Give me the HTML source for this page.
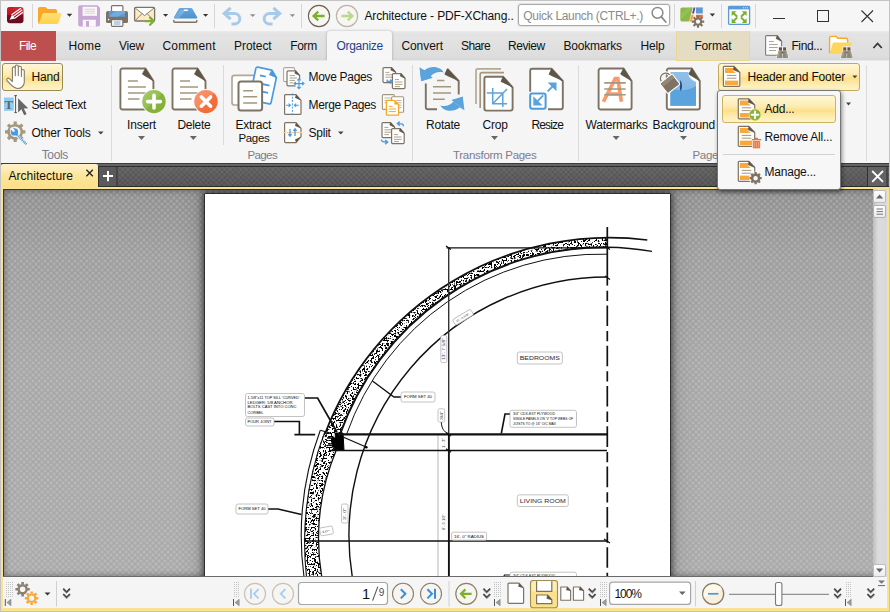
<!DOCTYPE html>
<html>
<head>
<meta charset="utf-8">
<title>Architecture - PDF-XChange Editor</title>
<style>
html,body{margin:0;padding:0;}
body{width:890px;height:612px;overflow:hidden;background:#f4f4f4;font-family:"Liberation Sans",sans-serif;font-size:12px;color:#111;}
#app{position:relative;width:890px;height:612px;overflow:hidden;background:#f4f4f4;}
.abs{position:absolute;}
.t{position:absolute;white-space:nowrap;line-height:14px;height:14px;}
.c{text-align:center;}
svg{position:absolute;overflow:visible;}
/* title bar */
#titlebar{left:0;top:0;width:890px;height:31px;background:#f6f6f6;}
.vsep{position:absolute;width:1px;background:#d6d6d6;}
/* tab bar */
#tabbar{left:0;top:31px;width:890px;height:29px;background:linear-gradient(#ececec 0,#e4e4e4 2px,#dddddd 26px,#d6d6d6 29px);}
#filebtn{left:1px;top:31px;width:55px;height:29px;background:#bd4f4f;color:#fff;}
#orgtab{left:327px;top:31px;width:65px;height:30px;background:#f6f6f6;box-sizing:border-box;border-radius:3px 3px 0 0;box-shadow:0 0 3px rgba(0,0,0,.28);clip-path:inset(-4px -4px 0 -4px);}
#fmttab{left:676px;top:31px;width:74px;height:30px;background:#e4ddc3;border:1px solid #e9d892;border-top:none;box-sizing:border-box;}
/* ribbon */
#ribbon{left:0;top:60px;width:890px;height:103px;background:linear-gradient(#e9e9e9 0,#e9e9e9 1px,#f5f5f5 1px);}
#ribbonline{left:0;top:163px;width:890px;height:1px;background:#3c3c3c;}
.glabel{color:#7c7c8c;}
.ybtn{position:absolute;box-sizing:border-box;border:1px solid #c2a95c;border-radius:3px;background:linear-gradient(#fef6d8 0%,#fdecb0 40%,#fbe08c 56%,#fdecae 78%,#fef4cc 100%);}
/* doc tabs */
#doctabs{left:1px;top:164px;width:888px;height:23px;background:linear-gradient(#6a6a6a 0,#5e5e5e 2px,#303030 2px,#303030 3px,#646464 3px,#565656 22px,#2a2a2a 22px);}
#doctab{left:1px;top:164px;width:97px;height:25px;border-radius:2px 2px 0 0;background:linear-gradient(#fdf1cc 0%,#fce597 50%,#fbe08a 100%);}
#yline{left:1px;top:187px;width:888px;height:2px;background:#f9e391;}
#docarea{left:3px;top:189px;width:884px;height:388px;background:#8d8d8d;overflow:hidden;}
#bottombar{left:3px;top:577px;width:884px;height:31px;background:#f5f5f5;}
.yframe{position:absolute;background:#f9e391;}
.gframe{position:absolute;background:#cfcfcf;}
</style>
</head>
<body>
<div id="app">

<!-- ================= TITLE BAR ================= -->
<div id="titlebar" class="abs"></div>
<div class="vsep" style="left:32px;top:4px;height:24px"></div>
<div class="vsep" style="left:214px;top:4px;height:24px"></div>
<div class="vsep" style="left:301px;top:4px;height:24px"></div>
<div class="vsep" style="left:674px;top:4px;height:24px"></div>
<div class="vsep" style="left:721px;top:4px;height:24px"></div>
<div class="vsep" style="left:755px;top:4px;height:24px"></div>
<div class="t" style="left:364.4px;top:9px;letter-spacing:-0.13px;">Architecture - PDF-XChang..</div>
<div class="abs" style="left:518px;top:4px;width:152px;height:22px;box-sizing:border-box;border:1px solid #a9a9a9;border-radius:3px;background:#fff;box-shadow:0 0 0 1px #e3e3e3;"></div>
<div class="t" style="left:523.3px;top:8.6px;color:#8a8a8a;letter-spacing:-0.32px;">Quick Launch (CTRL+.)</div>
<!--TI-START-->
<svg style="left:0;top:0" width="890" height="31" viewBox="0 0 890 31">
<defs>
<linearGradient id="appg" x1="0" y1="0" x2="0" y2="1"><stop offset="0" stop-color="#dc2433"/><stop offset="0.5" stop-color="#b4141f"/><stop offset="0.52" stop-color="#7a0d22"/><stop offset="1" stop-color="#640a1e"/></linearGradient>
<linearGradient id="foldf" x1="0" y1="0" x2="0" y2="1"><stop offset="0" stop-color="#ffe07a"/><stop offset="1" stop-color="#ffd24a"/></linearGradient>
<linearGradient id="scang" x1="0" y1="0" x2="0" y2="1"><stop offset="0" stop-color="#6aa8dc"/><stop offset="1" stop-color="#4d90cf"/></linearGradient>
</defs>
<!-- app icon -->
<rect x="7" y="7" width="16.5" height="16.3" rx="3" fill="url(#appg)"/>
<path d="M7,10 a3,3 0 0 1 3,-3 h4 l-7,8 z" fill="#c81824" opacity=".8"/>
<g stroke="#fff" stroke-width="1.2" fill="none" stroke-linecap="round"><path d="M13.2,16.4 L21.8,10.2"/><path d="M14.6,18.2 L22.6,12.4"/><path d="M12,14.6 L20.6,8.6"/></g>
<path d="M9.6,19.8 L12,14.8 L14.8,18.4 Z" fill="#fff"/>
<!-- folder -->
<path d="M38,9 a2,2 0 0 1 2,-2 h5.5 l2,2 h7.5 a2,2 0 0 1 2,2 v11 a2,2 0 0 1 -2,2 h-15 a2,2 0 0 1 -2,-2 z" fill="#f9a726"/>
<path d="M43.5,13 h17 a1,1 0 0 1 1,1.3 l-3,8.5 a2,2 0 0 1 -1.8,1.2 h-16.5 a1,1 0 0 1 -1,-1.3 l3,-8.5 a2,2 0 0 1 1.3,-1.2 z" fill="url(#foldf)"/>
<path d="M66.7,13.8 h5.6 l-2.8,3 z" fill="#333"/>
<!-- save -->
<path d="M78.2,7 a1.8,1.8 0 0 1 1.8,-1.8 h17.5 l2.5,2.5 v17.1 a1.8,1.8 0 0 1 -1.8,1.8 h-18.2 a1.8,1.8 0 0 1 -1.8,-1.8 z" fill="#c8a9d6"/>
<rect x="82.6" y="6.8" width="14.4" height="9" fill="#fbf7fb"/>
<path d="M84.5,9.2 h10.5 M84.5,11.2 h10.5 M84.5,13.2 h10.5" stroke="#d8cbb8" stroke-width="0.8"/>
<rect x="82.8" y="19.8" width="13" height="6.8" fill="#fbf7fb"/>
<rect x="86" y="21" width="3" height="5.6" fill="#c8a9d6"/>
<!-- printer -->
<rect x="111.5" y="5.6" width="11.4" height="7" rx="1" fill="#fff" stroke="#7d7263" stroke-width="1.2"/>
<path d="M106,13 a2,2 0 0 1 2,-2 h18 a2,2 0 0 1 2,2 v8.5 a1.5,1.5 0 0 1 -1.5,1.5 h-19 a1.5,1.5 0 0 1 -1.5,-1.5 z" fill="#7d7263"/>
<rect x="108.8" y="11" width="16.4" height="5.8" fill="#5b9bd5"/>
<path d="M108.8,16.8 L116,11 h9.2 v2 L117,16.8 z" fill="#7ab3e2" opacity=".7"/>
<rect x="111.5" y="19.6" width="11.4" height="6.8" rx="0.8" fill="#fff" stroke="#7d7263" stroke-width="1.2"/>
<path d="M113.8,22 h6.8 M113.8,24 h6.8" stroke="#5b9bd5" stroke-width="0.9"/>
<circle cx="108.6" cy="19.6" r="0.8" fill="#fff"/>
<!-- email -->
<rect x="134.6" y="7.4" width="20" height="13.6" rx="1.2" fill="#fdebc6" stroke="#7d7263" stroke-width="1.3"/>
<path d="M135.2,8 L144.6,15.6 L154,8 Z" fill="#fff"/>
<path d="M135.2,8 L144.6,15.6 L154,8 M135.2,20.6 L142,13.6 M154,20.6 L147.2,13.6" fill="none" stroke="#7d7263" stroke-width="0.9"/>
<path d="M145.5,21.2 h7.2 M150,17.8 L153.6,21.2 L150,24.8" fill="none" stroke="#7cb02c" stroke-width="2.2" stroke-linecap="round" stroke-linejoin="round"/>
<path d="M163,14 h5.2 l-2.6,2.8 z" fill="#333"/>
<!-- scanner -->
<path d="M180.5,8 h10.6 a1.5,1.5 0 0 1 1.3,0.8 l4.8,8.4 a0.8,0.8 0 0 1 -0.7,1.2 h-21.8 a0.8,0.8 0 0 1 -0.7,-1.2 l4.8,-8.4 a1.5,1.5 0 0 1 1.3,-0.8 z" fill="url(#scang)"/>
<path d="M174,18 L180,10 L186,10 L179,18.4 Z" fill="#8fc0ea" opacity=".5"/>
<rect x="183.6" y="9.6" width="4.4" height="1.4" rx="0.7" fill="#fff"/>
<path d="M173.8,20.4 v1 a0.8,0.8 0 0 0 0.8,0.8 h21.4 a0.8,0.8 0 0 0 0.8,-0.8 v-1" fill="none" stroke="#7d7263" stroke-width="1.4" stroke-linecap="round"/>
<path d="M203,14 h5.2 l-2.6,2.8 z" fill="#333"/>
<!-- undo / redo -->
<g fill="none" stroke="#a6cae8" stroke-width="3" stroke-linecap="butt" stroke-linejoin="miter">
<path d="M225,13.5 H234.5 a5.3,5.3 0 0 1 0,10.6 H231.5"/>
<path d="M279,13.5 H269.5 a5.3,5.3 0 0 0 0,10.6 H272.5"/>
</g>
<path d="M222,13.5 L229.6,6.8 L231.6,9 L226.6,13.5 L231.6,18 L229.6,20.2 Z" fill="#a6cae8"/>
<path d="M282,13.5 L274.4,6.8 L272.4,9 L277.4,13.5 L272.4,18 L274.4,20.2 Z" fill="#a6cae8"/>
<path d="M250,14.3 h5.4 l-2.7,2.8 z" fill="#8e8e8e"/>
<path d="M289.7,14.3 h5.4 l-2.7,2.8 z" fill="#8e8e8e"/>
<!-- back / forward -->
<circle cx="319" cy="16" r="10.6" fill="#f7f6f2" stroke="#6e6450" stroke-width="1.1"/>
<path d="M313.6,16 h11 M318.2,11.6 L313.6,16 L318.2,20.4" fill="none" stroke="#7cb02c" stroke-width="2.3" stroke-linejoin="miter"/>
<circle cx="347" cy="16" r="10.6" fill="#f7f6f2" stroke="#bcb5a6" stroke-width="1.2"/>
<path d="M352.4,16 h-11 M347.8,11.6 L352.4,16 L347.8,20.4" fill="none" stroke="#b9d98f" stroke-width="2.3" stroke-linejoin="miter"/>
<!-- magnifier -->
<circle cx="657.5" cy="12.8" r="5.4" fill="none" stroke="#8a8a8a" stroke-width="1.5"/>
<path d="M661.4,16.8 L665.8,22" stroke="#8a8a8a" stroke-width="1.8" stroke-linecap="round"/>
<!-- UI options -->
<path d="M682,7.4 h10.8 l-3.6,14.2 h-7.2 a1.6,1.6 0 0 1 -1.6,-1.6 v-11 a1.6,1.6 0 0 1 1.6,-1.6 z" fill="#8bb84a"/>
<path d="M680.4,20 L692.8,7.4 h-4 L680.4,14 z" fill="#9cc65c" opacity=".6"/>
<path d="M693.6,7.4 h1.8 l-1.4,6.1 h-2 z" fill="#7a3a9a"/>
<rect x="696" y="7.4" width="6.8" height="6.1" fill="#5b9bd5"/>
<path d="M691.4,14.8 h2.2 l-1.7,6.8 h-2.2 z" fill="#f5a030"/>
<rect x="696" y="14.8" width="6.8" height="3" fill="#ee6a3a"/>
<g fill="#7d7263"><circle cx="698" cy="21.6" r="4.2"/>
<g stroke="#7d7263" stroke-width="2.1"><path d="M698,15.4 v12.4 M691.8,21.6 h12.4 M693.6,17.2 l8.8,8.8 M702.4,17.2 l-8.8,8.8"/></g></g>
<circle cx="698" cy="21.6" r="2.2" fill="#f6f6f6"/>
<path d="M709.7,13.6 h5.4 l-2.7,3 z" fill="#333"/>
<!-- fullscreen -->
<rect x="728.6" y="6.4" width="21" height="18" rx="0.8" fill="#fbfdff" stroke="#5b9bd5" stroke-width="1.3"/>
<rect x="728.6" y="6.4" width="21" height="3" fill="#5b9bd5"/>
<g fill="#fff"><circle cx="743.4" cy="7.8" r="0.55"/><circle cx="745.4" cy="7.8" r="0.55"/><circle cx="747.4" cy="7.8" r="0.55"/></g>
<g fill="#7cb02c" stroke="#7cb02c">
<g id="fsarr"><path d="M731.6,11.2 H736.4 L731.6,16 Z" stroke="none"/><path d="M733.4,13 L737.2,16.8" stroke-width="2" fill="none"/></g>
<use href="#fsarr" transform="translate(1478.2,0) scale(-1,1)"/>
<use href="#fsarr" transform="translate(0,34.2) scale(1,-1)"/>
<use href="#fsarr" transform="translate(1478.2,34.2) scale(-1,-1)"/>
</g>
<!-- window controls -->
<path d="M773,18.5 h12" stroke="#333" stroke-width="1"/>
<rect x="817.5" y="10.5" width="11" height="11" fill="none" stroke="#333" stroke-width="1"/>
<path d="M861.5,10.5 l11.5,11.5 M873,10.5 l-11.5,11.5" stroke="#333" stroke-width="1.1"/>
</svg>
<!--TI-END-->

<!-- ================= TAB BAR ================= -->
<div id="tabbar" class="abs"></div>
<div id="filebtn" class="abs"></div>
<div id="orgtab" class="abs"></div>
<div id="fmttab" class="abs"></div>
<div class="t" style="left:19.0px;top:39px;color:#fff;letter-spacing:-0.59px;">File</div>
<div class="t" style="left:68.4px;top:39px;letter-spacing:0.15px;">Home</div>
<div class="t" style="left:119.0px;top:39px;letter-spacing:-0.20px;">View</div>
<div class="t" style="left:162.5px;top:39px;letter-spacing:0.17px;">Comment</div>
<div class="t" style="left:234.0px;top:39px;letter-spacing:-0.06px;">Protect</div>
<div class="t" style="left:290.2px;top:39px;letter-spacing:-0.30px;">Form</div>
<div class="t" style="left:336.4px;top:39px;color:#1f3f8f;letter-spacing:-0.26px;">Organize</div>
<div class="t" style="left:401.4px;top:39px;letter-spacing:-0.06px;">Convert</div>
<div class="t" style="left:461.0px;top:39px;letter-spacing:-0.61px;">Share</div>
<div class="t" style="left:508.0px;top:39px;letter-spacing:-0.44px;">Review</div>
<div class="t" style="left:563.4px;top:39px;letter-spacing:-0.18px;">Bookmarks</div>
<div class="t" style="left:640.5px;top:39px;letter-spacing:-0.15px;">Help</div>
<div class="t" style="left:694.4px;top:39px;letter-spacing:-0.17px;">Format</div>
<div class="t" style="left:791.4px;top:39px;letter-spacing:-0.35px;">Find...</div>
<!--TB-START-->
<svg style="left:0;top:31px" width="890" height="30" viewBox="0 31 890 30">
<defs>
<g id="binoc">
<path d="M2,0 H5.2 V3.1 L5.6,11.1 H-0.1 L2,3.1 Z M6.1,0 H9.3 V3.1 L11.3,11.1 H5.7 L6.1,3.1 Z" fill="#f4f4f4" stroke="#f4f4f4" stroke-width="1.2" stroke-linejoin="round"/>
<path d="M2.1,3 H5.1 L5.5,10.2 H0 Z" fill="#8f8675"/><path d="M6.2,3 H9.2 L11.2,10.2 H5.8 Z" fill="#8f8675"/>
<path d="M2.1,3 L0,10.2 H2.2 L3.4,3 Z M9.2,3 L11.2,10.2 H9.4 L8.2,3 Z" fill="#a59c8a"/>
<rect x="2.1" y="1" width="3" height="2.1" fill="#5d5548"/><rect x="6.2" y="1" width="3" height="2.1" fill="#5d5548"/>
<rect x="5" y="4.6" width="1.3" height="2" fill="#5d5548"/>
<rect x="0" y="10.1" width="5.5" height="1.1" fill="#41a0ea"/><rect x="5.8" y="10.1" width="5.4" height="1.1" fill="#41a0ea"/>
<rect x="2.1" y="0" width="3" height="1.1" fill="#41a0ea"/><rect x="6.2" y="0" width="3" height="1.1" fill="#41a0ea"/>
</g>
</defs>
<!-- find doc -->
<path d="M766.6,35.6 h10.6 l4.4,5.8 v12.8 a1,1 0 0 1 -1,1 h-14 a1,1 0 0 1 -1,-1 v-17.6 a1,1 0 0 1 1,-1 z" fill="#fdfdfd" stroke="#857a67" stroke-width="1.1" stroke-linejoin="round"/>
<path d="M777.2,35.6 L776,38.6 L781.4,41.2 Z" fill="#5d5548" stroke="#5d5548" stroke-width="0.5" stroke-linejoin="round"/>
<path d="M769,41.5 h4.8 M769,44.5 h8.8 M769,47.5 h8.8 M769,50.5 h7" stroke="#9a8f7c" stroke-width="0.8"/>
<use href="#binoc" x="776.9" y="46.9"/>
<!-- folder search -->
<path d="M829.6,38 a1.6,1.6 0 0 1 1.6,-1.6 h5 l1.8,1.8 h8 a1.6,1.6 0 0 1 1.6,1.6 v12.6 h-18 z" fill="#fff" stroke="#f9a726" stroke-width="1.4"/>
<path d="M834,42.4 h17 a0.8,0.8 0 0 1 0.8,1 l-2.6,9.4 a1.6,1.6 0 0 1 -1.5,1.2 h-16.9 a0.8,0.8 0 0 1 -0.8,-1 l2.6,-9.4 a1.6,1.6 0 0 1 1.4,-1.2 z" fill="#ffd65c"/>
<use href="#binoc" x="841.2" y="46.9"/>
<!-- caret -->
<path d="M873.4,48 L877.6,43.4 L881.8,48" fill="none" stroke="#333" stroke-width="1.7"/>
</svg>
<!--TB-END-->

<!-- ================= RIBBON ================= -->
<div id="ribbon" class="abs"></div>
<div class="abs" style="left:327px;top:60px;width:65px;height:1px;background:#f6f6f6;"></div>
<div class="abs" style="left:676px;top:60px;width:74px;height:1px;background:#e9d892;"></div>
<div class="abs" style="left:1px;top:60px;width:55px;height:1px;background:#c05a58;"></div>
<div class="vsep" style="left:111px;top:65px;height:96px;background:#dadada"></div>
<div class="vsep" style="left:223px;top:65px;height:80px;background:#dadada"></div>
<div class="vsep" style="left:412px;top:65px;height:96px;background:#dadada"></div>
<div class="vsep" style="left:578px;top:65px;height:96px;background:#dadada"></div>
<div class="vsep" style="left:866px;top:65px;height:96px;background:#dadada"></div>
<div class="ybtn" style="left:2px;top:63px;width:61px;height:28px;border-color:#9c8b4e;"></div>
<div class="t" style="left:31.4px;top:70px;letter-spacing:-0.17px;">Hand</div>
<div class="t" style="left:31.4px;top:98px;letter-spacing:-0.36px;">Select Text</div>
<div class="t" style="left:31.4px;top:126px;letter-spacing:-0.17px;">Other Tools</div>
<div class="t glabel" style="left:41.7px;top:148px;letter-spacing:-0.36px;">Tools</div>
<div class="t" style="left:127.0px;top:118px;letter-spacing:-0.17px;">Insert</div>
<div class="t" style="left:177.4px;top:118px;letter-spacing:-0.26px;">Delete</div>
<div class="t" style="left:235.4px;top:118px;letter-spacing:-0.25px;">Extract</div>
<div class="t" style="font-size:11.5px;left:238.4px;top:131px;letter-spacing:-0.30px;">Pages</div>
<div class="t glabel" style="font-size:11.5px;left:247.5px;top:148px;letter-spacing:-0.62px;">Pages</div>
<div class="t" style="left:308.6px;top:70px;letter-spacing:-0.33px;">Move Pages</div>
<div class="t" style="left:308.6px;top:98px;letter-spacing:-0.36px;">Merge Pages</div>
<div class="t" style="left:308.6px;top:126px;letter-spacing:-0.27px;">Split</div>
<div class="t" style="left:426.0px;top:118px;letter-spacing:-0.23px;">Rotate</div>
<div class="t" style="left:482.4px;top:118px;letter-spacing:-0.18px;">Crop</div>
<div class="t" style="left:531.4px;top:118px;letter-spacing:-0.85px;">Resize</div>
<div class="t glabel" style="font-size:11.5px;left:453.0px;top:148px;letter-spacing:-0.29px;">Transform Pages</div>
<div class="t" style="left:585.6px;top:118px;letter-spacing:-0.22px;">Watermarks</div>
<div class="t" style="left:652.6px;top:118px;letter-spacing:-0.17px;">Background</div>
<div class="t glabel" style="font-size:11.5px;left:692.5px;top:148px;letter-spacing:-0.34px;">Page</div>
<div class="ybtn" style="left:718px;top:63px;width:142px;height:28px;"></div>
<div class="t" style="left:747.5px;top:70px;letter-spacing:-0.19px;">Header and Footer</div>
<!--R1-START-->
<svg style="left:0;top:60px" width="890" height="104" viewBox="0 60 890 104">
<defs>
<linearGradient id="grn" x1="0" y1="0" x2="1" y2="1"><stop offset="0" stop-color="#a9cc6e"/><stop offset="0.5" stop-color="#93bd4c"/><stop offset="0.5" stop-color="#86b33a"/><stop offset="1" stop-color="#84b238"/></linearGradient>
<linearGradient id="red" x1="0" y1="0" x2="1" y2="1"><stop offset="0" stop-color="#fb966e"/><stop offset="0.5" stop-color="#f9875a"/><stop offset="0.5" stop-color="#f4703c"/><stop offset="1" stop-color="#f26a34"/></linearGradient>
<!-- big page 33x41 at 0,0 with fold -->
<g id="bigpage">
<path d="M2,0 H25 L33,12.4 V39 a2,2 0 0 1 -2,2 H2 a2,2 0 0 1 -2,-2 V2 a2,2 0 0 1 2,-2 z" fill="#fff" stroke="#7d7263" stroke-width="1.9" stroke-linejoin="round"/>
<path d="M25,0 L22,5.6 C25,8 29,9.5 32.4,12 Z" fill="#5d5548" stroke="#5d5548" stroke-width="0.8" stroke-linejoin="round"/>
</g>
<g id="pagelines" stroke="#a3977f" stroke-width="1.5">
<path d="M7.5,12.4 H17.5 M7.5,18.5 H25.5 M7.5,24.4 H25.5 M7.5,30.4 H19"/>
</g>
<!-- small page 12.5x15 -->
<g id="smpage">
<path d="M1,0 H8.6 L12.6,4.6 V14 a1,1 0 0 1 -1,1 H1 a1,1 0 0 1 -1,-1 V1 a1,1 0 0 1 1,-1 z" fill="#fff" stroke="#7d7263" stroke-width="1.2" stroke-linejoin="round"/>
<path d="M8.6,0 L7.8,2.4 L12.4,4.6 Z" fill="#5d5548" stroke="#5d5548" stroke-width="0.6" stroke-linejoin="round"/>
</g>
</defs>
<!-- hand -->
<path d="M12.4,81.6 V68.3 a1.4,1.4 0 0 1 2.9,0 V75.6 V66.5 a1.5,1.5 0 0 1 3,0 V75.6 V67.8 a1.5,1.5 0 0 1 3.1,0 V76.4 V70.9 a1.45,1.45 0 0 1 2.9,0 V82 C24.3,86 21,88.5 17.7,88.5 C14.5,88.5 12.6,86.6 10.4,84.2 L7.2,80.8 a1.5,1.5 0 0 1 2.2,-2.2 L12.4,81.6 Z" fill="#fff" stroke="#857a64" stroke-width="1.1" stroke-linejoin="round"/>
<!-- select text -->
<rect x="4" y="97.5" width="9.8" height="13.3" fill="#8ecdf6"/>
<text x="8.9" y="109" font-family="'Liberation Serif',serif" font-size="13" font-weight="bold" fill="#666" text-anchor="middle">T</text>
<path d="M15.6,95.6 V112.6 M14.3,95.6 H16.9 M14.3,112.6 H16.9" stroke="#555" stroke-width="1"/>
<path d="M18.1,98.2 V112.4 L21.4,109.3 L24.2,115.2 L26.6,114 L23.8,108.4 L28.2,108.2 Z" fill="#666"/>
<!-- other tools gear -->
<g stroke="#a3977f" fill="none">
<circle cx="15.2" cy="131.8" r="6.6" stroke-width="2.6"/>
<g stroke-width="3.2"><path d="M15.2,121.6 v3 M15.2,139 v3 M5,131.8 h3 M22.4,131.8 h3 M8,124.6 l2.1,2.1 M20.3,136.9 l2.1,2.1 M22.4,124.6 l-2.1,2.1 M10.1,136.9 l-2.1,2.1"/></g>
</g>
<path d="M17,133.2 L28.4,144.6 L26.4,146.8 L15,135.4 Z" fill="#f5f5f5"/>
<path d="M15.6,133.4 L26.4,144.2" stroke="#4a9ae0" stroke-width="2.3" stroke-dasharray="1.1 0.7"/>
<circle cx="14.4" cy="131.9" r="3.7" fill="#4a9ae0"/>
<path d="M14.6,131.8 L9.6,129.2 L12.2,126.4 Z" fill="#f5f5f5"/>
<circle cx="13.4" cy="130.6" r="1.3" fill="#f5f5f5"/>
<path d="M98,131.4 h5.6 l-2.8,3 z" fill="#444"/>
<!-- insert -->
<use href="#bigpage" x="120.4" y="68.5"/><use href="#pagelines" x="120.4" y="68.5"/>
<circle cx="154" cy="101.6" r="12.6" fill="#f5f5f5"/>
<circle cx="154" cy="101.6" r="11.7" fill="url(#grn)"/>
<path d="M154,95.2 V108 M147.6,101.6 H160.4" stroke="#fff" stroke-width="3.6" stroke-linecap="round"/>
<path d="M138.0,136.1 h7 l-3.5,3.8 z" fill="#666"/>
<!-- delete -->
<use href="#bigpage" x="172.5" y="68.5"/><use href="#pagelines" x="172.5" y="68.5"/>
<circle cx="206" cy="101.6" r="12.6" fill="#f5f5f5"/>
<circle cx="206" cy="101.6" r="11.7" fill="url(#red)"/>
<path d="M201.4,97 L210.6,106.2 M210.6,97 L201.4,106.2" stroke="#fff" stroke-width="3.6" stroke-linecap="round"/>
<path d="M189.8,136.1 h7 l-3.5,3.8 z" fill="#666"/>
<!-- extract pages -->
<rect x="232" y="75.4" width="24" height="29.6" rx="2.5" fill="#fff" stroke="#b3a993" stroke-width="1.7"/>
<g transform="translate(256.2,66.8) rotate(12)">
<path d="M1.6,0 H16 L22,6.4 V32 a1.6,1.6 0 0 1 -1.6,1.6 H1.6 a1.6,1.6 0 0 1 -1.6,-1.6 V1.6 a1.6,1.6 0 0 1 1.6,-1.6 z" fill="#fff" stroke="#4a9ae0" stroke-width="1.7" stroke-linejoin="round"/>
<path d="M16,0 L14.6,5 L22,6.4 Z" fill="#4a9ae0" stroke="#4a9ae0" stroke-width="0.8" stroke-linejoin="round"/>
<path d="M5.4,7.6 H11.4 M7,15.6 H17 M7,23 H17" stroke="#4a9ae0" stroke-width="1.9"/>
</g>
<rect x="238.5" y="81.4" width="23.6" height="29" rx="2.5" fill="#fff" stroke="#7d7263" stroke-width="2"/>
<path d="M243.2,90.8 H253 M243.2,96.8 H257.2 M243.2,103 H257.2" stroke="#a3977f" stroke-width="1.6"/>
<!-- move pages -->
<rect x="283.6" y="67.6" width="11" height="14" rx="1.4" fill="#fff" stroke="#b3a993" stroke-width="1.1"/>
<use href="#smpage" x="287" y="70.8"/>
<path d="M289.6,75.6 H295 M289.6,78 H297 M289.6,80.4 H295 M289.6,82.8 H293" stroke="#a3977f" stroke-width="0.9"/>
<circle cx="299" cy="83.6" r="4.4" fill="#f5f5f5"/>
<path d="M299,78.8 V88.4 M294.2,83.6 H303.8 M297.4,80.4 L299,78.6 L300.6,80.4 M297.4,86.8 L299,88.6 L300.6,86.8 M295.8,82 L294,83.6 L295.8,85.2 M302.2,82 L304,83.6 L302.2,85.2" stroke="#4a9ae0" stroke-width="1.1" fill="none"/>
<!-- merge pages -->
<path d="M285.6,94.6 H296 L301,100.4 V113.4 a1,1 0 0 1 -1,1 H285.6 a1,1 0 0 1 -1,-1 V95.6 a1,1 0 0 1 1,-1 z" fill="#fff" stroke="#7d7263" stroke-width="1.2" stroke-linejoin="round"/>
<path d="M296,94.6 L295,97.8 L300.8,100.4 Z" fill="#5d5548"/>
<path d="M292.4,93.4 V115.6" stroke="#4a9ae0" stroke-width="1" stroke-dasharray="2 1.3"/>
<path d="M286,105.2 H290 M288.6,103.6 L290.4,105.2 L288.6,106.8 M298.8,105.2 H294.8 M296.2,103.6 L294.4,105.2 L296.2,106.8" stroke="#4a9ae0" stroke-width="1.1" fill="none"/>
<!-- split -->
<path d="M285.6,122.6 H296 L301,128.4 V136.6 L296,142.6 H285.6 a1,1 0 0 1 -1,-1 V123.6 a1,1 0 0 1 1,-1 z" fill="#fff" stroke="#7d7263" stroke-width="1.2" stroke-linejoin="round"/>
<path d="M296,122.6 L295,125.8 L300.8,128.4 Z" fill="#5d5548"/><path d="M296,142.6 L295,139.4 L300.8,136.8 Z" fill="#5d5548"/>
<path d="M283.4,132.5 H302.4" stroke="#f7cf9c" stroke-width="1.3"/>
<path d="M290,129 V136 M288.4,134.2 L290,136.2 L291.6,134.2 M295,136 V129 M293.4,130.8 L295,128.8 L296.6,130.8" stroke="#4a9ae0" stroke-width="1.3" fill="none"/>
<path d="M338,131.4 h5.6 l-2.8,3 z" fill="#444"/>
<!-- right column icon 1 -->
<use href="#smpage" x="383" y="67.6"/>
<path d="M385.4,72.4 H389.4 M385.4,74.8 H392.4 M385.4,77.2 H392.4" stroke="#a3977f" stroke-width="0.9"/>
<use href="#smpage" x="392.4" y="73.6"/>
<path d="M395,79.6 H399 M395,82 H402.4 M395,84.4 H402.4 M395,86.6 H400" stroke="#a3977f" stroke-width="0.9"/>
<path d="M387.2,79.4 V81.4 H391.6 M390,79.6 L392.2,81.4 L390,83.4" stroke="#4a9ae0" stroke-width="1.4" fill="none"/>
<!-- right column icon 2 -->
<rect x="382.4" y="94.6" width="12" height="14.8" rx="1" fill="#fff" stroke="#a3977f" stroke-width="1.1"/>
<rect x="391.6" y="96.8" width="12" height="15.4" rx="1" fill="#fff" stroke="#a3977f" stroke-width="1.1"/>
<path d="M384.4,98 H392 M384.4,100.4 H392 M384.4,102.8 H392 M396,100.4 H401.6 M396,102.8 H401.6 M396,105.2 H401.6 M396,107.6 H401.6" stroke="#b8ad98" stroke-width="0.9"/>
<path d="M387.4,100.4 H394.4 L398.6,104.6 V114.2 a1,1 0 0 1 -1,1 H387.4 a1,1 0 0 1 -1,-1 V101.4 a1,1 0 0 1 1,-1 z" fill="#fff" stroke="#f9a726" stroke-width="1.3" stroke-linejoin="round"/>
<path d="M394.4,100.4 V104.6 H398.6 Z" fill="#f9a726"/>
<path d="M388.8,106.4 H392.4 M388.8,109 H396 M388.8,111.6 H396" stroke="#f9a726" stroke-width="1"/>
<!-- right column icon 3 -->
<use href="#smpage" x="382" y="122.6"/>
<path d="M384.4,127.4 H388.4 M384.4,129.8 H391.4 M384.4,132.2 H391.4 M384.4,134.6 H389" stroke="#a3977f" stroke-width="0.9"/>
<use href="#smpage" x="391.6" y="128.6" />
<path d="M394,134.6 H398 M394,137 H401.6 M394,139.4 H401.6 M394,141.6 H399" stroke="#a3977f" stroke-width="0.9"/>
<path d="M403.4,126.2 C403.4,123.4 401,123.6 398,123.6 M399.8,121.6 L397.4,123.6 L399.8,125.8" stroke="#4a9ae0" stroke-width="1.4" fill="none"/>
<path d="M381.4,139.4 C381.4,142.2 384,142 387,142 M385.2,140 L387.6,142 L385.2,144.2" stroke="#4a9ae0" stroke-width="1.4" fill="none"/>
</svg>
<!--R1-END-->
<!--R2-START-->
<svg style="left:0;top:60px" width="890" height="104" viewBox="0 60 890 104">
<defs>
<linearGradient id="bgblue" x1="0" y1="0" x2="0" y2="1"><stop offset="0" stop-color="#8fc0e8"/><stop offset="1" stop-color="#7ab4e2"/></linearGradient>
</defs>
<!-- rotate -->
<path d="M447.4,68.8 L458.7,81 V94.5 M425.8,83.6 V107.2 a2,2 0 0 0 2,2 H437" fill="none" stroke="#7d7263" stroke-width="1.9" stroke-linejoin="round"/>
<path d="M447.4,68.8 L444.8,74.2 C448,76.4 454,78 458.2,80.8 Z" fill="#5d5548" stroke="#5d5548" stroke-width="0.8" stroke-linejoin="round"/>
<path d="M437,80.5 H444.4 M433,86.8 H451 M433,92.9 H451 M433,99.2 H444.8" stroke="#a3977f" stroke-width="1.5"/>
<path d="M419.6,67.6 L430.6,76.4 C433.4,72.6 438.6,71 443.6,72.4 C441.6,67.6 432,64.4 424.4,70.2 Z M419.6,67.6 L421.2,81 L432.4,77.8 Z" fill="#5ba3dc"/>
<path d="M419.6,67.6 L421.2,81.2 L432.6,77.8 Z" fill="#5ba3dc"/>
<path d="M464.4,110.2 L453.4,101.4 C450.6,105.2 445.4,106.8 440.4,105.4 C442.4,110.2 452,113.4 459.6,107.6 Z" fill="#5ba3dc"/>
<path d="M464.4,110.2 L462.8,96.6 L451.4,100 Z" fill="#5ba3dc"/>
<!-- crop -->
<path d="M476,104 V70.6 a1.8,1.8 0 0 1 1.8,-1.8 H501" fill="none" stroke="#b3a993" stroke-width="1.7"/>
<path d="M480.2,108 V74.4 a1.8,1.8 0 0 1 1.8,-1.8 H504" fill="none" stroke="#a3977f" stroke-width="1.7"/>
<path d="M486.4,76.8 H503.2 L512.6,87.4 V108.6 a2,2 0 0 1 -2,2 H486.4 a2,2 0 0 1 -2,-2 V78.8 a2,2 0 0 1 2,-2 z" fill="#fff" stroke="#7d7263" stroke-width="1.9" stroke-linejoin="round"/>
<path d="M503.2,76.8 L501,81.4 C504,83.2 508.6,84.6 512.2,87.2 Z" fill="#5d5548" stroke="#5d5548" stroke-width="0.8" stroke-linejoin="round"/>
<path d="M492.7,88 V103.7 H507 M486.9,92.9 H502.8 V107 M492.7,103.7 L507,89" fill="none" stroke="#5ba3dc" stroke-width="1.5"/>
<path d="M491.0,136.1 h7 l-3.5,3.8 z" fill="#666"/>
<!-- resize -->
<path d="M530.2,91.8 V70.8 a2,2 0 0 1 2,-2 H551.7 L562.8,81 V107.2 a2,2 0 0 1 -2,2 H548" fill="#fff" stroke="#7d7263" stroke-width="1.9" stroke-linejoin="round"/>
<path d="M551.7,68.8 L549,74.2 C552.4,76.4 558,78 562.4,80.8 Z" fill="#5d5548" stroke="#5d5548" stroke-width="0.8" stroke-linejoin="round"/>
<rect x="530.2" y="93.4" width="15.4" height="15.4" rx="2" fill="#fff" stroke="#4a9ae0" stroke-width="2"/>
<path d="M543.2,95.4 L537,101.6 M534.2,98.4 V104.6 H540.4 Z" stroke="#5ba3dc" stroke-width="1.8" fill="#5ba3dc" stroke-linejoin="miter"/>
<path d="M547.6,91.4 L553,86 M555.6,89.2 V83.4 H549.8 Z" stroke="#5ba3dc" stroke-width="1.8" fill="#5ba3dc"/>
<!-- watermarks -->
<use href="#bigpage" x="598.6" y="68.5"/>
<path d="M603.4,101.8 L615.2,78.6 H617.8 L621.4,101.8 M608.6,94 H620" fill="none" stroke="#fa9a6a" stroke-width="3.6" stroke-linejoin="miter"/>
<path d="M604.2,82.9 H625.7 M604.2,89 H625.7 M604.2,94.8 H625.7" stroke="#a3977f" stroke-width="1.6"/>
<path d="M612.6,136.1 h7 l-3.5,3.8 z" fill="#666"/>
<!-- background -->
<use href="#bigpage" x="666.8" y="68.5"/>
<path d="M670.4,72 H688.6 C687.6,76 690.6,79.6 696,82 V105.8 H670.4 Z" fill="url(#bgblue)"/>
<path d="M670.4,88 C676,90.4 686,92 696,86 V105.8 H670.4 Z" fill="#5ba3dc"/>
<path d="M680.4,80 C682.6,84 682.4,88.6 680.6,91.2 C679.4,88 679.8,84 680.4,80 Z" fill="#2a4a8a"/>
<g transform="rotate(-38 670.4 84.4)">
<path d="M665.2,76 a5.2,4.6 0 0 1 10.4,0" fill="none" stroke="#fff" stroke-width="3.2"/>
<path d="M665.2,76.4 a5.2,4.8 0 0 1 10.4,0" fill="none" stroke="#7d7263" stroke-width="1.3"/>
<rect x="662.6" y="77.2" width="15.6" height="13" rx="1.2" fill="#7d7263" stroke="#fff" stroke-width="1.1"/>
<rect x="663.2" y="77.8" width="14.4" height="4" fill="#938873"/>
</g>
<path d="M680.0,136.1 h7 l-3.5,3.8 z" fill="#666"/>
<!-- small arrow right of popup -->
<path d="M846,102.6 h5 l-2.5,2.8 z" fill="#444"/>
</svg>
<!--R2-END-->

<div id="ribbonline" class="abs"></div>

<!-- ================= DOC TABS ================= -->
<div id="doctabs" class="abs"></div>
<div class="abs" style="left:1px;top:167px;width:888px;height:19px;background:repeating-linear-gradient(45deg, rgba(0,0,0,.05) 0 1.4px, rgba(255,255,255,.015) 1.4px 3.8px),repeating-linear-gradient(-45deg, rgba(0,0,0,.05) 0 1.4px, rgba(255,255,255,.015) 1.4px 3.8px);"></div>
<div id="doctab" class="abs"></div>
<div class="t" style="left:8.5px;top:169px;letter-spacing:0.03px;">Architecture</div>
<div id="yline" class="abs"></div>
<!--DT-START-->
<svg style="left:0;top:163px" width="890" height="27" viewBox="0 163 890 27">
<path d="M86.4,169.8 L92.8,176.2 M92.8,169.8 L86.4,176.2" stroke="#222" stroke-width="1.3"/>
<rect x="98.5" y="166.5" width="18.5" height="20" fill="#5a5a5a" stroke="#303030" stroke-width="1"/>
<path d="M108,171 V181.2 M103,176.1 H113" stroke="#fff" stroke-width="2"/>
<rect x="867.5" y="166.5" width="19.5" height="20" fill="#636363" stroke="#303030" stroke-width="1"/>
<path d="M872.2,171 L883,181.8 M883,171 L872.2,181.8" stroke="#fff" stroke-width="1.8"/>
</svg>
<!--DT-END-->

<!-- ================= DOC AREA ================= -->
<div class="gframe" style="left:0;top:163px;width:1px;height:449px"></div>
<div class="gframe" style="left:889px;top:163px;width:1px;height:449px"></div>
<div class="gframe" style="left:0;top:611px;width:890px;height:1px"></div>
<div class="yframe" style="left:1px;top:187px;width:2px;height:423px"></div>
<div class="yframe" style="left:887px;top:187px;width:2px;height:423px"></div>
<div class="yframe" style="left:1px;top:608px;width:888px;height:3px"></div>
<div id="docarea" class="abs">
<!--DOC-START-->
<div class="abs" style="left:0;top:0;width:884px;height:388px;background:
radial-gradient(circle at 50% 50%, rgba(255,255,255,.24) 0, rgba(255,255,255,.16) 1.1px, rgba(255,255,255,0) 2.2px) 0 0/6px 6px,
radial-gradient(circle at 50% 50%, rgba(255,255,255,.24) 0, rgba(255,255,255,.16) 1.1px, rgba(255,255,255,0) 2.2px) 3px 3px/6px 6px,
linear-gradient(#8e8e8e 0,#9d9d9d 70px,#a6a6a6 180px,#a9a9a9 388px);box-shadow:inset 1px 1px 0 #3a3a3a, inset 0 -1px 0 #4a4a4a, inset 0 0 6px 1px rgba(0,0,0,.4);"></div>
<div class="abs" style="left:201px;top:4px;width:465px;height:390px;background:#fff;border:1px solid #2e2e2e;border-radius:1px;box-shadow:0 0 7px 1px rgba(0,0,0,.6), 0 0 24px 3px rgba(0,0,0,.15);"></div>
<svg style="left:-3px;top:-189px" width="890" height="612" viewBox="0 0 890 612">
<defs>
<clipPath id="pgclip"><rect x="205" y="194" width="465" height="383"/></clipPath>
<filter id="speckle" x="0" y="0" width="100%" height="100%" filterUnits="objectBoundingBox">
<feTurbulence type="fractalNoise" baseFrequency="0.55" numOctaves="2" seed="7" result="n"/>
<feColorMatrix in="n" type="matrix" values="0 0 0 0 0  0 0 0 0 0  0 0 0 0 0  0 0 0 14 -7.25" result="m"/>
<feComposite in="m" in2="SourceGraphic" operator="in"/>
</filter>
</defs>
<g clip-path="url(#pgclip)" fill="none" stroke="#111" stroke-linecap="butt">
<!-- wall speckle (upper) -->
<path d="M607,237.6 A304.4,304.4 0 0 0 324.9,434 L340.1,434 A280,280 0 0 1 607,247.3 Z" fill="#000" stroke="none" filter="url(#speckle)"/>
<!-- wall speckle (lower) -->
<path d="M324.2,432 A314.7,314.7 0 0 0 306.6,578 L321.9,578 A232.8,232.8 0 0 1 336.3,450 L336,432 Z" fill="#000" stroke="none" filter="url(#speckle)"/>
<!-- outer arc -->
<path d="M647.3,240 A304.4,304.4 0 0 0 324.9,434" stroke-width="1.7"/>
<!-- wall inner arc -->
<path d="M652,251.4 A280,280 0 0 0 607,247.3" stroke-width="1.4"/><path d="M607,247.3 A280,280 0 0 0 340.1,434" stroke-width="2"/>
<!-- line3 -->
<path d="M607,254.2 A268.6,268.6 0 0 0 346.7,434" stroke-width="1"/>
<!-- inner arc -->
<path d="M607,277 A258.5,258.5 0 0 0 352.3,577" stroke-width="1.4"/>
<!-- lower formwork lines -->
<path d="M320.3,430.2 A305.7,305.7 0 0 0 304,577" stroke-width="1.1"/>
<path d="M325,431.5 A314.7,314.7 0 0 0 306.6,578" stroke-width="1.1"/>
<path d="M320.3,430.2 L331,433.3" stroke-width="1.1"/>
<path d="M336.3,450 A232.8,232.8 0 0 0 321.9,578" stroke-width="1.3"/>
<!-- corbel blob -->
<path d="M335,433 L343,433 L344,450.5 L336,450.5 L333,446 L336,441 Z" fill="#000" stroke="#000" stroke-width="1"/>
<path d="M327,438 L336,438 M328,445 L336,446" stroke-width="1.5"/><path d="M331.5,438.5 L336,438.5 L336,447 L332.5,447 Z" fill="#000" stroke="#000" stroke-width="1"/>
<path d="M343,437 L366,447" stroke-width="1.3"/>
<circle cx="366.3" cy="447.3" r="1.3" fill="#000" stroke="none"/>
<!-- straight lines -->
<path d="M448.7,247.8 V434" stroke="#333" stroke-width="1.4"/><path d="M448.9,434 V577" stroke-width="1.9"/>
<path d="M438,434 V577" stroke="#9a9a9a" stroke-width="0.7"/>
<path d="M446.5,247.8 H607" stroke-width="1.2"/>
<path d="M338,434.3 H607" stroke-width="2.2"/>
<path d="M330,450.5 H607" stroke-width="1.5"/>
<path d="M306,541 H607" stroke-width="1.3"/>
<path d="M607.3,227 V285.6" stroke-width="1.7"/><path d="M607.3,290.7 V577" stroke-width="1.7" stroke-dasharray="10.3 4.4 20.6 5"/>
<!-- ticks -->
<path d="M446,246 l5,3.6 M605,246 l5,3.6 M605,276 l5,3.6 M446,432.5 l5,3.6 M446,448.7 l5,3.6 M604,539 l6,4 M304,539 l5,4" stroke-width="1.2"/>
<!-- leaders -->
<path d="M304.5,398 H317.6 L337,432" stroke-width="1.7"/>
<path d="M274,421.5 H299.4 V434.6 M294.4,434.6 H315.2" stroke-width="1.6"/>
<path d="M401,397 H394 L372.5,381" stroke-width="1.3"/>
<path d="M268,509 H278 L301.5,514.5" stroke-width="1.4"/>
<path d="M510,414 H505 L501.3,433.5" stroke-width="1.6"/>
<path d="M441.3,422 C441.5,428 444,432 448,433.5" stroke-width="1"/>
<path d="M510,575 H504.5 L503,578" stroke-width="1.2"/>
<!-- label boxes -->
<g stroke="#b4b4b4" stroke-width="0.8" fill="#fff">
<rect x="245.5" y="393.5" width="59" height="23" rx="2"/>
<rect x="245.5" y="418" width="28.5" height="8" rx="2"/>
<rect x="401" y="392" width="34" height="10" rx="2"/>
<rect x="236" y="504" width="32" height="10" rx="2"/>
<rect x="510" y="410.3" width="66.5" height="17" rx="2"/>
<rect x="510" y="572.2" width="66.5" height="12" rx="2"/>
<rect x="517.3" y="352" width="45" height="12" rx="2"/>
<rect x="517.3" y="494.8" width="51" height="11.7" rx="2"/>
<rect x="451.6" y="532.2" width="35" height="8" rx="1.5"/>
<rect x="438" y="408.8" width="6.7" height="13.2" rx="1.5"/>
<rect x="440.8" y="335.6" width="6" height="27" rx="1.5"/>
<rect x="452.5" y="314" width="21" height="6.5" rx="1.5" transform="rotate(-31 463 317.2)"/>
<rect x="320" y="527" width="13" height="8" rx="1.5" transform="rotate(-10 326 531)"/>
<rect x="341.5" y="504" width="6.5" height="19" rx="1.5"/>
</g>
</g>
<g clip-path="url(#pgclip)" font-family="'Liberation Sans',sans-serif" fill="#2a2a38" stroke="none">
<text x="539.8" y="360.3" font-size="5.6" text-anchor="middle" textLength="40" lengthAdjust="spacingAndGlyphs">BEDROOMS</text>
<text x="542.8" y="502.9" font-size="5.6" text-anchor="middle" textLength="46" lengthAdjust="spacingAndGlyphs">LIVING ROOM</text>
<g font-size="3.1" fill="#0a0a0a">
<text x="247.5" y="398.6" textLength="52" lengthAdjust="spacingAndGlyphs">1-5/8"x11 TOP SILL 'CURVED'</text>
<text x="247.5" y="403.6" textLength="45" lengthAdjust="spacingAndGlyphs">LEDGER; 5/8 ANCHOR</text>
<text x="247.5" y="408.3" textLength="49" lengthAdjust="spacingAndGlyphs">BOLTS CAST INTO CONC</text>
<text x="247.5" y="413.6" textLength="16" lengthAdjust="spacingAndGlyphs">CORBEL</text>
<text x="247.5" y="423.3" textLength="24" lengthAdjust="spacingAndGlyphs">POUR JOINT</text>
<text x="404" y="398.3" textLength="28" lengthAdjust="spacingAndGlyphs">FORM SET 40</text>
<text x="238.5" y="510.3" textLength="27" lengthAdjust="spacingAndGlyphs">FORM SET 40</text>
<text x="513" y="415" textLength="42" lengthAdjust="spacingAndGlyphs">3/4" CDX-EXT PLYWOOD</text>
<text x="513" y="420" textLength="60" lengthAdjust="spacingAndGlyphs">SINGLE PANELS ON 'V' TOP WEBS OF</text>
<text x="513" y="424.8" textLength="43" lengthAdjust="spacingAndGlyphs">JOISTS TO @ 16" O/C MAX</text>
<text x="513" y="576.8" textLength="42" lengthAdjust="spacingAndGlyphs">3/4" CDX-EXT PLYWOOD</text>
<text x="454" y="537.8" textLength="30" lengthAdjust="spacingAndGlyphs">16'- 0" RADIUS</text>
<text fill="#444" font-size="2.8" transform="translate(444.8,360) rotate(-90)" textLength="22" lengthAdjust="spacingAndGlyphs">13'- 7 5/8"</text>
<text fill="#444" font-size="2.8" transform="translate(445.2,530) rotate(-90)" textLength="16" lengthAdjust="spacingAndGlyphs">8'- 0 1/2"</text>
<text fill="#444" font-size="2.8" transform="translate(445.2,448) rotate(-90)" textLength="10" lengthAdjust="spacingAndGlyphs">1'- 3"</text>
<text fill="#444" font-size="2.8" transform="translate(442.8,420) rotate(-90)" textLength="9" lengthAdjust="spacingAndGlyphs">3/4"</text>
<text fill="#444" font-size="2.8" transform="translate(456.5,322.5) rotate(-31)" textLength="15" lengthAdjust="spacingAndGlyphs">15'- 0 5/8"</text>
<text fill="#444" font-size="2.8" transform="translate(346,520) rotate(-90)" textLength="12" lengthAdjust="spacingAndGlyphs">3'- 0"</text>
<text fill="#444" font-size="2.8" transform="translate(322,533) rotate(-10)" textLength="8" lengthAdjust="spacingAndGlyphs">10"</text>
</g>
</g>
</svg>
<div class="abs" style="left:0;top:387px;width:870px;height:1px;background:#6a6a6a;"></div>
<!--SB-START-->
<div class="abs" style="left:870px;top:0;width:14px;height:388px;background:linear-gradient(90deg,#bdbdbd,#dcdcdc 35%,#d8d8d8);"></div>
<div class="abs" style="left:870px;top:1px;width:13px;height:13px;box-sizing:border-box;background:linear-gradient(#fdfdfd,#ececec);border:1px solid #bdbdbd;border-radius:2px;"></div>
<div class="abs" style="left:870px;top:16px;width:13px;height:13px;box-sizing:border-box;background:linear-gradient(#fdfdfd,#ececec);border:1px solid #b0b0b0;border-radius:2px;"></div>
<div class="abs" style="left:870px;top:375px;width:13px;height:13px;box-sizing:border-box;background:linear-gradient(#fdfdfd,#ececec);border:1px solid #bdbdbd;border-radius:2px;"></div>
<svg style="left:870px;top:0" width="14" height="388" viewBox="0 0 14 388">
<path d="M3,9.6 L6.6,5.6 L10.2,9.6 Z" fill="#666"/>
<path d="M3.6,20 H10 M3.6,22.6 H10 M3.6,25.2 H10" stroke="#777" stroke-width="1"/>
<path d="M3,379.6 L6.6,383.6 L10.2,379.6 Z" fill="#666"/>
</svg>
<!--SB-END-->
<!--DOC-END-->
</div>

<!-- ================= BOTTOM BAR ================= -->
<div id="bottombar" class="abs"></div>
<!--BT-START-->
<svg style="left:0;top:577px" width="890" height="35" viewBox="0 577 890 35">
<defs>
<pattern id="grip" x="0" y="0" width="2" height="2" patternUnits="userSpaceOnUse"><rect x="0" y="0" width="1" height="1" fill="#c4c4c4"/></pattern>
<g id="endmark"><path d="M0.5,0 V7" stroke="#555" stroke-width="1"/><path d="M6.2,0.2 L2,3.5 L6.2,6.8 Z" fill="#9c9c9c" stroke="#777" stroke-width="0.5"/></g>
<g id="dblchev" fill="none" stroke-linejoin="miter"><path d="M0.4,0.6 L3.8,4 L7.2,0.6 M0.4,6 L3.8,9.4 L7.2,6" stroke="#444" stroke-width="1.7"/><path d="M0.4,2 L3.8,5.4 L7.2,2 M0.4,7.4 L3.8,10.8 L7.2,7.4" stroke="#9a9a9a" stroke-width="1"/></g>
<g id="pgico"><path d="M1,0 H11 L15.6,5 V19.2 a1,1 0 0 1 -1,1 H1 a1,1 0 0 1 -1,-1 V1 a1,1 0 0 1 1,-1 z" fill="#fff" stroke="#7d7263" stroke-width="1.2" stroke-linejoin="round"/><path d="M11,0 L10.2,3.2 L15.4,5 Z" fill="#5d5548"/></g>
</defs>
<!-- grips -->
<rect x="5" y="582" width="8" height="15" fill="url(#grip)"/><use href="#endmark" x="4.8" y="599"/>
<rect x="233" y="582" width="7" height="15" fill="url(#grip)"/><use href="#endmark" x="233" y="599"/>
<rect x="494" y="582" width="7" height="15" fill="url(#grip)"/><use href="#endmark" x="494" y="599"/>
<rect x="600" y="582" width="7" height="15" fill="url(#grip)"/><use href="#endmark" x="600" y="599"/>
<rect x="845" y="582" width="7" height="15" fill="url(#grip)"/><use href="#endmark" x="845" y="599"/>
<!-- gears -->
<g stroke="#8a8172" fill="none"><circle cx="22.6" cy="589.2" r="4" stroke-width="2.4"/><g stroke-width="2.6"><path d="M22.6,582 v2.6 M22.6,593.8 v2.6 M15.4,589.2 h2.6 M27.2,589.2 h2.6 M17.5,584.1 l1.9,1.9 M25.8,592.4 l1.9,1.9 M27.7,584.1 l-1.9,1.9 M19.4,592.4 l-1.9,1.9"/></g></g>
<circle cx="31.6" cy="598.2" r="7.6" fill="#f5f5f5"/>
<g stroke="#f9a83a" fill="none"><circle cx="31.6" cy="598.2" r="3.7" stroke-width="2.2"/><g stroke-width="2.5"><path d="M31.6,591.4 v2.4 M31.6,602.6 v2.4 M24.8,598.2 h2.4 M36,598.2 h2.4 M26.8,593.4 l1.8,1.8 M34.6,601.2 l1.8,1.8 M36.4,593.4 l-1.8,1.8 M28.6,601.2 l-1.8,1.8"/></g></g>
<path d="M44.6,592.4 h5.8 l-2.9,3.2 z" fill="#333"/>
<path d="M56.5,581 V606.5" stroke="#d0d0d0" stroke-width="1"/>
<use href="#dblchev" x="62.8" y="588"/>
<!-- nav circles -->
<circle cx="255" cy="593.8" r="10.5" fill="#f6f5f1" stroke="#c9c2b4" stroke-width="1.2"/>
<path d="M251,588.8 V598.8 M258.6,589.2 L254,593.8 L258.6,598.4" fill="none" stroke="#a9cdee" stroke-width="1.9"/>
<circle cx="283" cy="593.8" r="10.5" fill="#f6f5f1" stroke="#c9c2b4" stroke-width="1.2"/>
<path d="M285.4,589.2 L280.8,593.8 L285.4,598.4" fill="none" stroke="#a9cdee" stroke-width="1.9"/>
<rect x="298.5" y="582.5" width="89" height="22" rx="3" fill="#fff" stroke="#a6a6a6" stroke-width="1.2"/>
<circle cx="403" cy="593.8" r="10.5" fill="#f6f5f1" stroke="#8a806a" stroke-width="1.1"/>
<path d="M400.8,589.2 L405.4,593.8 L400.8,598.4" fill="none" stroke="#3a8ee0" stroke-width="2"/>
<circle cx="431" cy="593.8" r="10.5" fill="#f6f5f1" stroke="#8a806a" stroke-width="1.1"/>
<path d="M435,588.8 V598.8 M427.4,589.2 L432,593.8 L427.4,598.4" fill="none" stroke="#3a8ee0" stroke-width="2"/>
<path d="M449,581 V606.5" stroke="#d0d0d0" stroke-width="1"/>
<circle cx="466.3" cy="593.8" r="10.5" fill="#f6f5f1" stroke="#8a8264" stroke-width="1.2"/>
<path d="M461,593.8 h10.6 M465.4,589.4 L461,593.8 L465.4,598.2" fill="none" stroke="#7cb02c" stroke-width="2.2"/>
<use href="#dblchev" x="483" y="588"/>
<!-- page layout -->
<use href="#pgico" x="508" y="583.2"/>
<rect x="530.5" y="580.5" width="27" height="27.2" rx="2.5" fill="#fbe08e" stroke="#9f8e52" stroke-width="1.1"/>
<rect x="531.5" y="581.5" width="25" height="10" rx="2" fill="#fdf0c0" opacity=".8"/>
<path d="M536.6,581.2 V591.4 H551.8 V581.2 Z" fill="#fff" stroke="none"/><path d="M536.6,581.2 V591.4 H551.8 V581.2" fill="none" stroke="#7d7263" stroke-width="1.2"/>
<path d="M536.6,595 H547.6 L551.8,599.8 V603.6 H536.6 Z" fill="#fff" stroke="#7d7263" stroke-width="1.2"/>
<path d="M547.6,595 L546.8,598.4 L551.6,599.8 Z" fill="#5d5548" stroke="#5d5548" stroke-width="0.6"/>
<g fill="#fff" stroke="#7d7263" stroke-width="1.1" stroke-linejoin="round"><path d="M560.8,587 H567.2 L570.6,590.6 V600.2 H560.8 Z"/><path d="M573.4,587 H580 L583.6,590.6 V600.2 H573.4 Z"/></g>
<path d="M567.2,587 L566.4,590 L570.4,590.6 Z M580,587 L579.2,590 L583.4,590.6 Z" fill="#5d5548" stroke="#5d5548" stroke-width="0.5"/>
<use href="#dblchev" x="588.4" y="588"/>
<!-- zoom combo -->
<rect x="609.6" y="582.2" width="81" height="22.2" rx="3" fill="#fff" stroke="#a6a6a6" stroke-width="1.2"/>
<path d="M679,591.6 h6.6 l-3.3,3.4 z" fill="#666"/>
<path d="M695.5,581 V606.5" stroke="#d0d0d0" stroke-width="1"/>
<!-- zoom out -->
<circle cx="713.2" cy="593.8" r="10.5" fill="#f8efdc" stroke="#857a62" stroke-width="1.3"/>
<path d="M703.6,597.6 A10.5,10.5 0 0 1 722.4,589 Z" fill="#fdf8ec" opacity=".9"/>
<path d="M708,593.8 H718.4" stroke="#4a9ae0" stroke-width="1.7"/>
<path d="M729,594.3 H829" stroke="#7a7a7a" stroke-width="1"/>
<rect x="775.5" y="582.5" width="6.4" height="23" rx="2" fill="#fcfcfc" stroke="#7a7a7a" stroke-width="1.1"/>
<use href="#dblchev" x="833.8" y="588"/>
<use href="#dblchev" x="867" y="588"/>
<!-- small scroll arrow under scrollbar -->
<path d="M878,580.4 h7 l-3.5,3.4 z" fill="#777"/><path d="M878,585.6 h7" stroke="#666" stroke-width="1"/>
</svg>
<div class="t" style="left:300px;top:586px;width:84.3px;text-align:right;font-size:14.5px;line-height:16px;height:16px;">1<span style="font-size:10px;position:relative;top:-2.8px;color:#4a4a4a;margin-left:8.6px;">9</span></div>
<svg style="left:370px;top:584px" width="10" height="20" viewBox="370 584 10 20"><path d="M372.6,600.6 L377.8,586.6" stroke="#555" stroke-width="1.1"/></svg>
<div class="t" style="left:614.4px;top:587px;letter-spacing:-1.03px;">100%</div>
<!--BT-END-->

<div class="abs" style="left:0;top:0;width:888px;height:610px;border:1px solid #c3c3c3;pointer-events:none;"></div>
<!-- ================= POPUP MENU ================= -->
<!--POP-START-->
<div class="abs" style="left:717px;top:90px;width:124px;height:100px;box-sizing:border-box;background:#f7f7f7;border:1px solid #767676;border-radius:3px;box-shadow:1px 2px 4px rgba(0,0,0,.45);"></div>
<div class="ybtn" style="left:722px;top:95px;width:114px;height:28px;border-color:#cdb463;"></div>
<div class="abs" style="left:723px;top:154px;width:112px;height:1px;background:#d2d2d2;"></div>
<div class="t" style="left:764.5px;top:101.5px;letter-spacing:-0.23px;">Add...</div>
<div class="t" style="left:764.5px;top:130px;letter-spacing:-0.22px;">Remove All...</div>
<div class="t" style="left:764.5px;top:164.5px;letter-spacing:-0.22px;">Manage...</div>
<svg style="left:0;top:60px" width="890" height="135" viewBox="0 60 890 135">
<defs>
<g id="hfpage">
<path d="M0.8,0 H10.6 L16.4,6 V19.2 a0.8,0.8 0 0 1 -0.8,0.8 H0.8 a0.8,0.8 0 0 1 -0.8,-0.8 V0.8 a0.8,0.8 0 0 1 0.8,-0.8 z" fill="#fff" stroke="#7d7263" stroke-width="1.2" stroke-linejoin="round"/>
<path d="M1.6,1.6 H10 L9.4,4 L12.4,6.6 H1.6 Z" fill="#f9a83a"/>
<rect x="1.6" y="14.2" width="13.2" height="4.4" fill="#f9a83a"/>
<path d="M3.4,9 H13 M3.4,11.8 H13" stroke="#a3977f" stroke-width="1"/>
<path d="M10.6,0 L9.8,3.4 L16.2,6 Z" fill="#5d5548" stroke="#5d5548" stroke-width="0.5" stroke-linejoin="round"/>
</g>
</defs>
<!-- H&F button icon -->
<use href="#hfpage" x="723.4" y="66.4"/>
<path d="M852.3,75.4 h5.2 l-2.6,2.8 z" fill="#444"/>
<!-- Add -->
<use href="#hfpage" x="738.3" y="98.8"/>
<circle cx="755" cy="114.8" r="6.4" fill="#fce79c"/>
<circle cx="755" cy="114.8" r="5.6" fill="#86b33a"/>
<path d="M755,111.4 V118.2 M751.6,114.8 H758.4" stroke="#fff" stroke-width="1.9" stroke-linecap="round"/>
<!-- Remove all -->
<use href="#hfpage" x="738.3" y="126.4"/>
<path d="M752.6,140.6 H760.4 V148 a0.8,0.8 0 0 1 -0.8,0.8 H753.4 a0.8,0.8 0 0 1 -0.8,-0.8 Z" fill="#f4703c" stroke="#f7f7f7" stroke-width="0.8"/>
<path d="M751.8,139.6 H761.2 M755,138.4 H758" stroke="#f4703c" stroke-width="1.3"/>
<path d="M754.6,142 V147.4 M756.5,142 V147.4 M758.4,142 V147.4" stroke="#fbb090" stroke-width="0.7"/>
<!-- Manage -->
<use href="#hfpage" x="738.3" y="161.4"/>
<circle cx="755.6" cy="178.2" r="6.6" fill="#f7f7f7"/>
<g stroke="#7d7263" fill="none"><circle cx="755.6" cy="178.2" r="3.5" stroke-width="2.5"/><path d="M759.80,178.20 L761.70,178.20 M758.57,181.17 L759.91,182.51 M755.60,182.40 L755.60,184.30 M752.63,181.17 L751.29,182.51 M751.40,178.20 L749.50,178.20 M752.63,175.23 L751.29,173.89 M755.60,174.00 L755.60,172.10 M758.57,175.23 L759.91,173.89" stroke-width="2.3"/></g>
</svg>
<!--POP-END-->

</div>
</body>
</html>
